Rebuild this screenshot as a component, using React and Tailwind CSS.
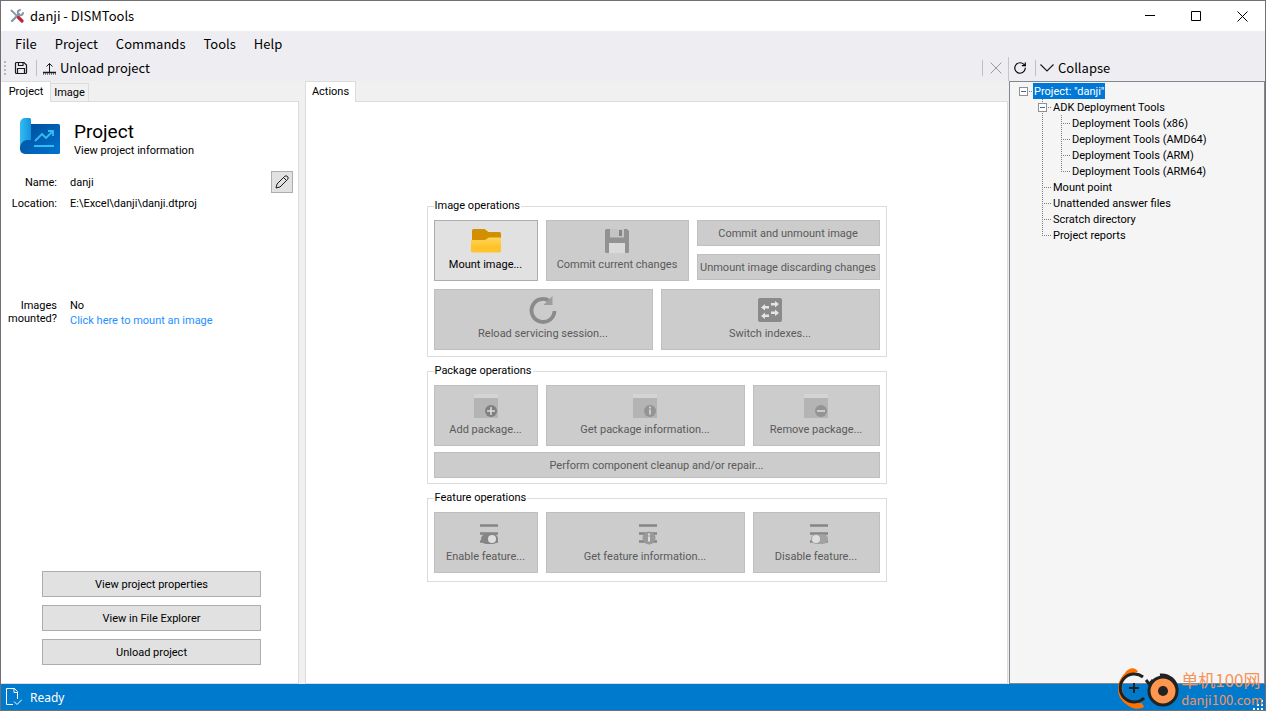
import { RotateCw } from 'lucide-react'

const MENUS = ['File', 'Project', 'Commands', 'Tools', 'Help']

const TREE = [
  { guides: ['root'], label: 'Project: "danji"', selected: true },
  { guides: ['blank', 'branch'], label: 'ADK Deployment Tools' },
  { guides: ['blank', 'line', 'tee'], label: 'Deployment Tools (x86)' },
  { guides: ['blank', 'line', 'tee'], label: 'Deployment Tools (AMD64)' },
  { guides: ['blank', 'line', 'tee'], label: 'Deployment Tools (ARM)' },
  { guides: ['blank', 'line', 'elbow'], label: 'Deployment Tools (ARM64)' },
  { guides: ['blank', 'tee'], label: 'Mount point' },
  { guides: ['blank', 'tee'], label: 'Unattended answer files' },
  { guides: ['blank', 'tee'], label: 'Scratch directory' },
  { guides: ['blank', 'elbow'], label: 'Project reports' },
]

function Guide({ kind }) {
  const box = kind === 'root' || kind === 'branch'
  return (
    <svg width="19" height="16" className="shrink-0" fill="none" stroke="#808080" strokeDasharray="1 1" shapeRendering="crispEdges">
      {['line', 'tee', 'branch'].includes(kind) && <path d="M9.5 0v16" />}
      {kind === 'elbow' && <path d="M9.5 0v9" />}
      {kind !== 'blank' && kind !== 'line' && <path d="M9 8.5h9" />}
      {box && (
        <g strokeDasharray="none">
          <rect x="5.5" y="4.5" width="8" height="8" fill="#fff" stroke="#919191" />
          <path d="M7 8.5h5" stroke="#4b63a7" />
        </g>
      )}
    </svg>
  )
}

function AppIcon() {
  return (
    <svg width="14" height="14" viewBox="0 0 14 14" fill="none" strokeLinecap="round">
      <path d="M1.5 1.5l5 5" stroke="#8a98a5" strokeWidth="1.8" />
      <path d="M2 12l7-7" stroke="#8a98a5" strokeWidth="2.4" />
      <path d="M10 1a2.6 2.6 0 1 0 3 3" stroke="#8a98a5" strokeWidth="2" />
      <path d="M8.5 8.5l3.5 3.5" stroke="#b8293d" strokeWidth="3.2" />
    </svg>
  )
}

function SaveIcon() {
  return (
    <svg width="14" height="14" viewBox="0 0 14 14" fill="none" stroke="#1b1b1b" strokeWidth="1.2">
      <path d="M1.5 2.5a1 1 0 0 1 1-1h7.5l2.5 2.5v7.5a1 1 0 0 1-1 1h-9a1 1 0 0 1-1-1z" />
      <path d="M4.5 1.5v3h4.5v-3M3.5 12.5v-5h7v5" />
    </svg>
  )
}

function UnloadIcon() {
  return (
    <svg width="13" height="13" viewBox="0 0 13 13" fill="none" stroke="#1b1b1b">
      <path d="M6.5 10V1.5M3.5 4.5l3-3 3 3" />
      <path d="M0 10.5h13" strokeWidth="1.5" />
      <path d="M0 12h13" strokeDasharray="1 1" />
    </svg>
  )
}

function ProjectIcon() {
  return (
    <svg width="40" height="36" viewBox="0 0 40 36" fill="none">
      <defs>
        <linearGradient id="sheet" x1="0" y1="0" x2="1" y2="1">
          <stop stopColor="#004c97" />
          <stop offset="1" stopColor="#0073cf" />
        </linearGradient>
        <linearGradient id="roll" x1="0" y1="0" x2="1" y2="0">
          <stop stopColor="#32bdf0" />
          <stop offset="1" stopColor="#1693df" />
        </linearGradient>
      </defs>
      <path d="M5 6h33.5a1.5 1.5 0 0 1 1.5 1.5v27a1.5 1.5 0 0 1-1.5 1.5H5a5 5 0 0 1-5-5V11z" fill="url(#sheet)" />
      <path d="M0 31V5a5 5 0 0 1 5-5h4.5a1.5 1.5 0 0 1 1.5 1.5V22H7.500C3 22 0 26 0 31z" fill="url(#roll)" />
      <path d="M15 23l7-7 4 4 7-7M28 13h5v5M14 28h20" stroke="#35bdf1" strokeWidth="1.8" />
    </svg>
  )
}

function FolderIcon() {
  return (
    <svg width="30" height="24" viewBox="0 0 30 24">
      <defs>
        <linearGradient id="folder" x1="0" y1="0" x2="0" y2="1">
          <stop stopColor="#ffd65e" />
          <stop offset="0.6" stopColor="#ffc42c" />
        </linearGradient>
      </defs>
      <path d="M1 1.5A1.5 1.5 0 0 1 2.5 0h11l4 3h11a1.5 1.5 0 0 1 1.5 1.5V12H1z" fill="#d28f00" />
      <path d="M0 11h14l4-2.500h11a1 1 0 0 1 1 1V22a1.500 1.500 0 0 1-1.500 1.500h-27A1.500 1.500 0 0 1 0 22z" fill="url(#folder)" />
    </svg>
  )
}

function FloppyIcon() {
  return (
    <svg width="24" height="24" viewBox="0 0 24 24">
      <path d="M0 1.5A1.5 1.5 0 0 1 1.5 0H22l2 2v20.500a1.500 1.500 0 0 1-1.500 1.500h-21A1.500 1.500 0 0 1 0 22.500z" fill="#929292" />
      <path d="M5 0h14v8.500H5z" fill="#c4c4c4" />
      <path d="M4 14h16v10H4z" fill="#dadada" />
      <path d="M14 1h3v6h-3z" fill="#858585" />
    </svg>
  )
}

function ReloadIcon() {
  return (
    <svg width="28" height="28" viewBox="0 0 28 28" fill="none">
      <path d="M20.5 5A11.5 11.5 0 1 0 25.5 15" stroke="#8b8b8b" strokeWidth="3.8" />
      <path d="M23.5 0v9h-9z" fill="#9d9d9d" />
    </svg>
  )
}

function SwitchIcon() {
  return (
    <svg width="24" height="24" viewBox="0 0 24 24">
      <rect width="24" height="24" rx="2" fill="#8a8a8a" />
      <path
        d="M13 5h4V3l4 3-4 3.500v-2h-4zM11 8H7V6L3 9.500 7 12.500v-2h4zM13 13.500h4v-2l4 3.500-4 3v-2h-4zM11 16.500H7v-2L3 18l4 3v-2h4z"
        fill="#e4e4e4"
      />
    </svg>
  )
}

function PackageIcon({ kind }) {
  return (
    <svg width="24" height="24" viewBox="0 0 24 24">
      <path d="M0 0h24v4H0z" fill="#d4d4d4" />
      <path d="M0 4h24v20H0z" fill="#b4b4b4" />
      <circle cx="17" cy="17" r="6" fill={kind === 'add' ? '#808080' : '#949494'} />
      {kind === 'add' && <path d="M13 17h8M17 13v8" stroke="#ddd" strokeWidth="1.5" />}
      {kind === 'remove' && <path d="M13 17h8" stroke="#ddd" strokeWidth="1.5" />}
      {kind === 'info' && <path d="M17 12.5v2M17 15.5v5" stroke="#ccc" strokeWidth="2" />}
    </svg>
  )
}

function FeatureIcon({ kind }) {
  return (
    <svg width="24" height="24" viewBox="0 0 24 24">
      <path d="M6 4.5h18M6 12.5h18M6 20.5h18" stroke="#858585" strokeWidth="2.6" />
      {kind === 'info' ? (
        <>
          <circle cx="16" cy="17" r="6.5" fill="#999" />
          <path d="M16 12.5v2M16 15.5v5" stroke="#ddd" strokeWidth="2" />
        </>
      ) : (
        <>
          <rect x="7" y="13" width="17" height="10" rx="5" fill={kind === 'on' ? '#858585' : '#a2a2a2'} />
          <circle cx={kind === 'on' ? 18 : 12} cy="18" r="4" fill="#dedede" />
        </>
      )}
    </svg>
  )
}

function PushButton({ children }) {
  return <button className="h-[26px] border border-[#adadad] bg-[#e1e1e1] pt-0.5 text-black">{children}</button>
}

function ActionButton({ icon, label, disabled = true, className = '' }) {
  return (
    <button
      disabled={disabled}
      className={`flex flex-col items-center border whitespace-nowrap ${icon ? 'h-[61px] gap-[3px] pt-[6px]' : 'h-[26px] justify-center pt-0.5'} ${
        disabled ? 'border-[#bfbfbf] bg-[#cccccc] text-[#5a5a5a]' : 'border-[#adadad] bg-[#e1e1e1] text-black'
      } ${className}`}
    >
      {icon && <span className="flex h-7 items-center">{icon}</span>}
      <span>{label}</span>
    </button>
  )
}

function Group({ title, children, className = '' }) {
  return (
    <fieldset className={`min-w-0 border border-[#dcdcdc] px-[6px] ${className}`}>
      <legend className="px-px">{title}</legend>
      <div className="flex flex-col pt-[7px]">{children}</div>
    </fieldset>
  )
}

function TitleBar() {
  return (
    <header className="flex h-[30px] items-center justify-between bg-white pl-[9px] font-['Noto_Sans_CJK_SC',sans-serif] text-[13px]">
      <div className="flex items-center gap-[6px]">
        <AppIcon />
        <h1>danji - DISMTools</h1>
      </div>
      <div className="flex">
        <button aria-label="Minimize" className="flex h-[30px] w-[46px] items-center justify-center">
          <svg width="10" height="10" stroke="#000"><path d="M0 4.5h10" /></svg>
        </button>
        <button aria-label="Maximize" className="flex h-[30px] w-[46px] items-center justify-center">
          <svg width="10" height="10" stroke="#000" fill="none"><path d="M.5 .5h9v9h-9z" /></svg>
        </button>
        <button aria-label="Close" className="flex h-[30px] w-[46px] items-center justify-center">
          <svg width="11" height="11" stroke="#000"><path d="M.5 .5l10 10M10.5 .5l-10 10" /></svg>
        </button>
      </div>
    </header>
  )
}

function ProjectPanel() {
  return (
    <section className="flex w-[298px] shrink-0 flex-col">
      <div className="flex items-end" role="tablist">
        <button role="tab" aria-selected="true" className="relative z-10 -mb-px h-[21px] w-[50px] border-x border-t border-l-white border-[#dcdcdc] bg-white pb-px">
          Project
        </button>
        <button role="tab" aria-selected="false" className="h-[18px] w-[38px] border-t border-r border-[#dcdcdc] bg-[#f0f0f0] pt-px">
          Image
        </button>
      </div>
      <div className="flex flex-1 flex-col border border-l-0 border-[#dcdcdc] bg-white pb-[18px]">
        <div className="flex items-start gap-[14px] pt-4 pl-[19px]">
          <ProjectIcon />
          <div className="pt-[2px]">
            <h2 className="text-[19px] leading-6">Project</h2>
            <p>View project information</p>
          </div>
        </div>
        <dl className="mt-[13px] grid grid-cols-[56px_1fr] gap-x-[13px] pr-[5px]">
          <dt className="flex h-[22px] items-center justify-end pt-0.5">Name:</dt>
          <dd className="flex items-center justify-between">
            <span className="pt-0.5">danji</span>
            <button aria-label="Edit name" className="flex size-[22px] items-center justify-center border border-[#adadad] bg-[#e1e1e1]">
              <svg width="14" height="14" viewBox="0 0 14 14" fill="none" stroke="#1b1b1b" strokeLinejoin="round">
                <path d="M1 13l1-4 7.5-7.5a1.8 1.8 0 0 1 3 3L5 12zM8.5 2.5l3 3" />
              </svg>
            </button>
          </dd>
          <dt className="flex h-5 items-center justify-end pt-0.5">Location:</dt>
          <dd className="flex h-5 items-center pt-0.5">E:\Excel\danji\danji.dtproj</dd>
          <dt className="mt-[86px] text-right leading-[13px]">Images mounted?</dt>
          <dd className="mt-[86px] leading-[13px]">
            No
            <a href="#mount" className="mt-[2px] block text-[#1e90ff]">Click here to mount an image</a>
          </dd>
        </dl>
        <div className="mt-auto flex flex-col gap-2 pr-[37px] pl-[41px]">
          <PushButton>View project properties</PushButton>
          <PushButton>View in File Explorer</PushButton>
          <PushButton>Unload project</PushButton>
        </div>
      </div>
    </section>
  )
}

function ActionsPanel() {
  return (
    <section className="flex min-w-0 flex-1 flex-col">
      <div className="flex" role="tablist">
        <button role="tab" aria-selected="true" className="relative z-10 -mb-px h-[21px] w-[51px] border-x border-t border-[#dcdcdc] bg-white pb-px">
          Actions
        </button>
      </div>
      <div className="flex flex-1 flex-col items-center justify-center border border-[#dcdcdc] bg-white pb-1">
        <div className="flex w-[460px] flex-col gap-[7px]">
          <Group title="Image operations" className="pb-[6px]">
            <div className="flex gap-2">
              <ActionButton disabled={false} icon={<FolderIcon />} label="Mount image..." className="w-[104px]" />
              <ActionButton icon={<FloppyIcon />} label="Commit current changes" className="w-[143px]" />
              <div className="flex flex-1 flex-col gap-2">
                <ActionButton label="Commit and unmount image" />
                <ActionButton label="Unmount image discarding changes" />
              </div>
            </div>
            <div className="mt-2 grid grid-cols-2 gap-2">
              <ActionButton icon={<ReloadIcon />} label="Reload servicing session..." />
              <ActionButton icon={<SwitchIcon />} label="Switch indexes..." />
            </div>
          </Group>
          <Group title="Package operations" className="pb-[5px]">
            <div className="mb-[6px] flex gap-2">
              <ActionButton icon={<PackageIcon kind="add" />} label="Add package..." className="w-[104px]" />
              <ActionButton icon={<PackageIcon kind="info" />} label="Get package information..." className="flex-1" />
              <ActionButton icon={<PackageIcon kind="remove" />} label="Remove package..." className="w-[127px]" />
            </div>
            <ActionButton label="Perform component cleanup and/or repair..." />
          </Group>
          <Group title="Feature operations" className="pb-2">
            <div className="flex gap-2">
              <ActionButton icon={<FeatureIcon kind="on" />} label="Enable feature..." className="w-[104px]" />
              <ActionButton icon={<FeatureIcon kind="info" />} label="Get feature information..." className="flex-1" />
              <ActionButton icon={<FeatureIcon kind="off" />} label="Disable feature..." className="w-[127px]" />
            </div>
          </Group>
        </div>
      </div>
    </section>
  )
}

function ProjectTree() {
  return (
    <aside className="flex w-[257px] shrink-0 flex-col">
      <div className="flex h-6 items-center gap-2 border-l border-[#c5c5c9] pb-0.5 pl-1 font-['Noto_Sans_CJK_SC',sans-serif] text-[13px]">
        <button aria-label="Refresh"><RotateCw size={14} strokeWidth={2} /></button>
        <span className="h-4 w-px bg-[#c0c0c4]" />
        <button className="-ml-1 flex items-center gap-1">
          <svg width="14" height="8" fill="none" stroke="#1b1b1b" strokeWidth="1.2"><path d="M.5 .5L7 7 13.5 .5" /></svg>
          Collapse
        </button>
      </div>
      <ul className="ml-px flex-1 border border-[#828790] bg-[#f5f5f5] pt-px pl-1">
        {TREE.map((node) => (
          <li key={node.label} className="flex h-4 items-center">
            {node.guides.map((kind, i) => <Guide key={i} kind={kind} />)}
            <span className={`h-4 px-px pt-0.5 ${node.selected ? 'bg-[#0078d7] text-white' : ''}`}>{node.label}</span>
          </li>
        ))}
      </ul>
    </aside>
  )
}

function Watermark() {
  return (
    <div className="absolute right-0 bottom-0 flex items-end text-[#f5935b]">
      <svg width="64" height="43" viewBox="0 0 64 43" fill="none">
        <path d="M21 5c-2-5-9-5-13 1C-1 15-2 29 9 37c5 5 13 6 18 3l-2-4C11 38 2 26 6 15 9 9 14 6 21 5z" fill="#ff7200" />
        <path d="M26 10a14 14 0 1 0 1 21M29 13l4 5M36 13l-4 5M43 8c9-1 17 6 17 15" stroke="#222" strokeWidth="3" />
        <path d="M12 21h10M17 16v10" stroke="#222" strokeWidth="2" />
        <circle cx="46" cy="24" r="14" fill="#ff964f" stroke="#222" strokeWidth="3" />
        <circle cx="46" cy="24" r="5" fill="#222" />
      </svg>
      <div className="flex flex-col pr-0.5 font-['Noto_Sans_CJK_SC',sans-serif]">
        <span className="text-[17px] leading-5">单机100网</span>
        <span className="text-[13px] leading-5">danji100.com</span>
      </div>
    </div>
  )
}

export default function App() {
  return (
    <div className="relative flex min-h-screen flex-col border border-[#707074] bg-[#eeeef2] font-[Roboto,sans-serif] text-[11px] leading-[14px] text-black">
      <TitleBar />
      <nav className="flex h-[26px] items-center gap-[18px] pl-[14px] font-['Noto_Sans_CJK_SC',sans-serif] text-[13px]">
        {MENUS.map((menu) => <button key={menu}>{menu}</button>)}
      </nav>
      <div className="flex flex-1">
        <main className="flex min-w-0 flex-1 flex-col">
          <div className="flex h-6 items-center pr-[6px] pb-0.5 font-['Noto_Sans_CJK_SC',sans-serif] text-[13px]">
            <span className="ml-[3px] h-[14px] border-l-2 border-dotted border-[#b8b8bc]" />
            <button aria-label="Save project" className="ml-2"><SaveIcon /></button>
            <span className="mx-2 h-4 w-px bg-[#c0c0c4]" />
            <button className="-ml-[2px] flex items-center gap-1"><UnloadIcon />Unload project</button>
            <span className="ml-auto h-4 w-px bg-[#c0c0c4]" />
            <button aria-label="Close project" className="ml-[7px]">
              <svg width="12" height="12" stroke="#9b9b9d"><path d="M.5 .5l11 11M11.5 .5l-11 11" /></svg>
            </button>
          </div>
          <div className="flex flex-1 gap-[6px] bg-[#f0f0f0]">
            <ProjectPanel />
            <ActionsPanel />
          </div>
        </main>
        <ProjectTree />
      </div>
      <footer className="flex h-[26px] items-center gap-2 bg-[#007acc] pl-[5px] font-['Noto_Sans',sans-serif] text-[12px] text-white">
        <svg width="16" height="18" viewBox="0 0 16 18" fill="none" stroke="#fff">
          <path d="M7 16.5H.5V.5h8l3 3V11M8 .5v4h3.5M8 13.5l3 3 5-5" />
        </svg>
        <span className="pt-0.5">Ready</span>
        <svg width="10" height="10" fill="#fff" className="mr-[2px] ml-auto self-end">
          <path d="M8 0h2v2H8zM4 4h2v2H4zM8 4h2v2H8zM0 8h2v2H0zM4 8h2v2H4zM8 8h2v2H8z" />
        </svg>
      </footer>
      <Watermark />
    </div>
  )
}
